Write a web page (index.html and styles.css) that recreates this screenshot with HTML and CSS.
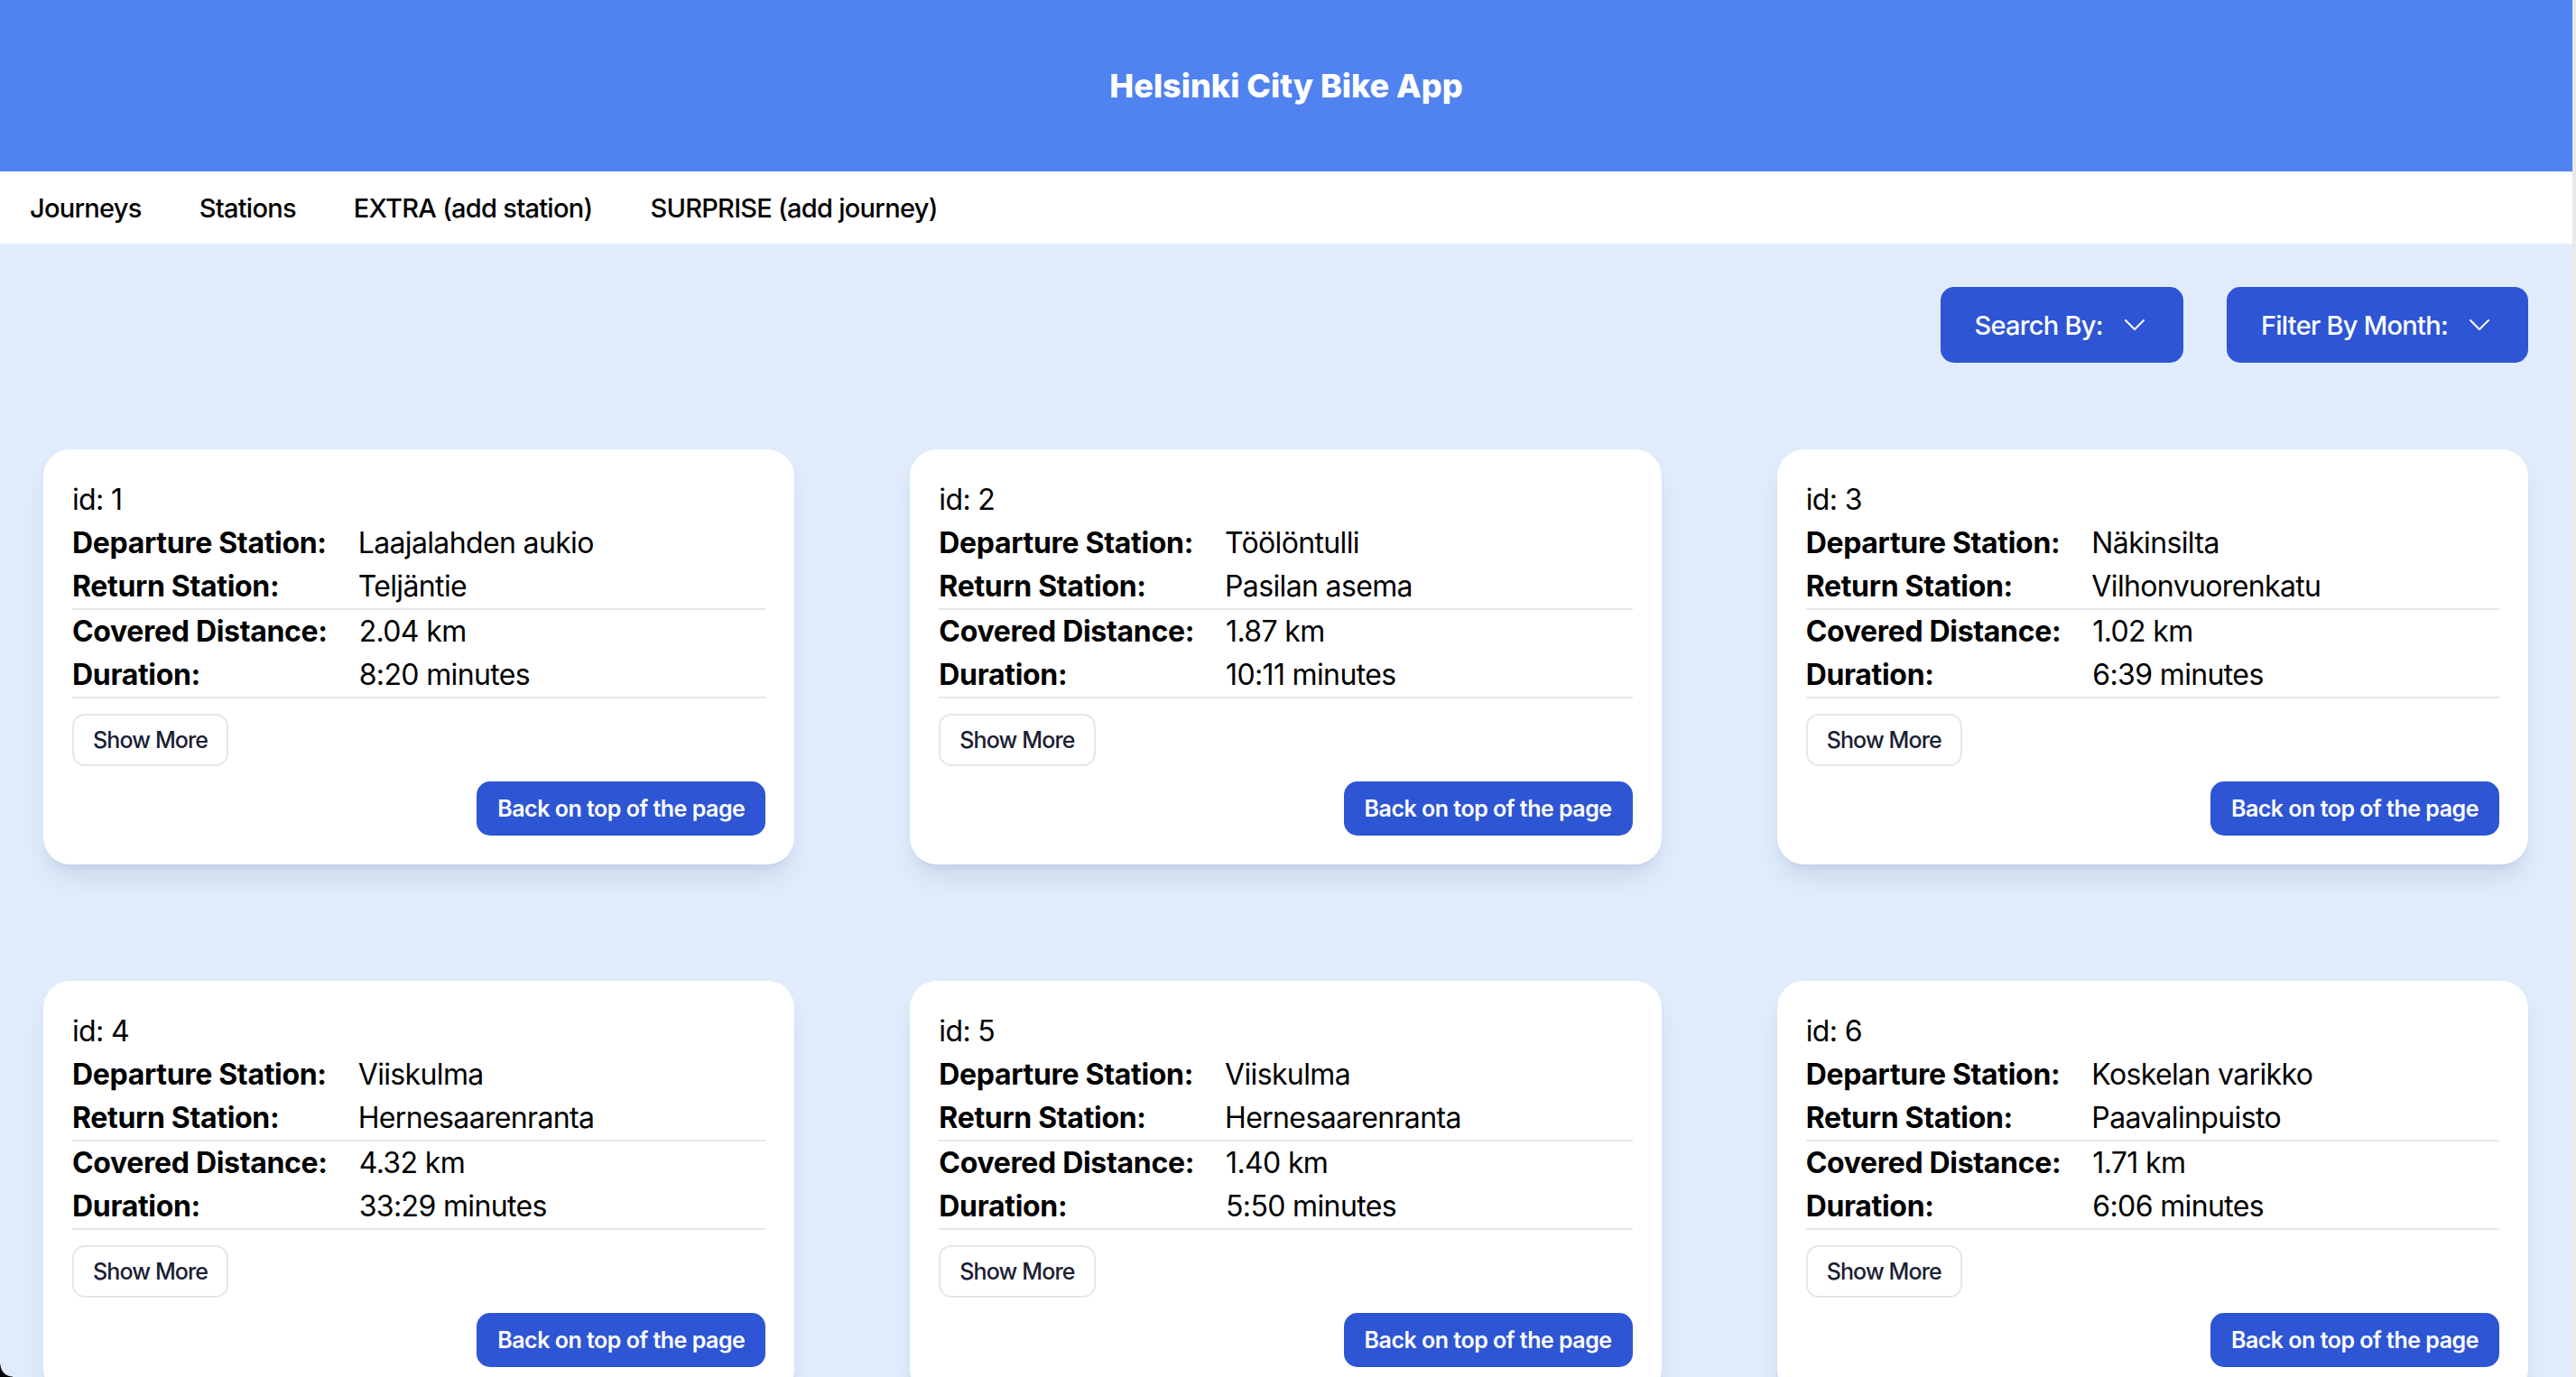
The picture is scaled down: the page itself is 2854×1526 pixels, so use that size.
FILE: index.html
```html
<!DOCTYPE html>
<html lang="en">
<head>
<meta charset="utf-8">
<title>Helsinki City Bike App</title>
<link rel="stylesheet" href="styles.css">
</head>
<body>
<div class="page">
  <header class="app-header">
    <h1 class="app-title">Helsinki City Bike App</h1>
  </header>
  <nav class="main-nav">
    <a class="nav-link" href="#">Journeys</a>
    <a class="nav-link" href="#">Stations</a>
    <a class="nav-link" href="#">EXTRA (add station)</a>
    <a class="nav-link" href="#">SURPRISE (add journey)</a>
  </nav>
  <main class="content">
    <div class="toolbar">
      <button class="dropdown-btn">Search By:
        <svg class="chevron" viewBox="0 0 22 12" width="22" height="12"><polyline points="1,1 11,11 21,1" fill="none" stroke="#fff" stroke-width="2" stroke-linecap="round" stroke-linejoin="round"/></svg>
      </button>
      <button class="dropdown-btn">Filter By Month:
        <svg class="chevron" viewBox="0 0 22 12" width="22" height="12"><polyline points="1,1 11,11 21,1" fill="none" stroke="#fff" stroke-width="2" stroke-linecap="round" stroke-linejoin="round"/></svg>
      </button>
    </div>
    <section class="card-grid">
      <article class="card">
        <p class="card-id">id: 1</p>
        <dl class="info"><dt>Departure Station:</dt><dd>Laajalahden aukio</dd><dt>Return Station:</dt><dd>Teljäntie</dd></dl>
        <dl class="info"><dt>Covered Distance:</dt><dd>2.04 km</dd><dt>Duration:</dt><dd>8:20 minutes</dd></dl>
        <button class="btn-outline">Show More</button>
        <div class="card-footer"><button class="btn-primary">Back on top of the page</button></div>
      </article>
      <article class="card">
        <p class="card-id">id: 2</p>
        <dl class="info"><dt>Departure Station:</dt><dd>Töölöntulli</dd><dt>Return Station:</dt><dd>Pasilan asema</dd></dl>
        <dl class="info"><dt>Covered Distance:</dt><dd>1.87 km</dd><dt>Duration:</dt><dd>10:11 minutes</dd></dl>
        <button class="btn-outline">Show More</button>
        <div class="card-footer"><button class="btn-primary">Back on top of the page</button></div>
      </article>
      <article class="card">
        <p class="card-id">id: 3</p>
        <dl class="info"><dt>Departure Station:</dt><dd>Näkinsilta</dd><dt>Return Station:</dt><dd>Vilhonvuorenkatu</dd></dl>
        <dl class="info"><dt>Covered Distance:</dt><dd>1.02 km</dd><dt>Duration:</dt><dd>6:39 minutes</dd></dl>
        <button class="btn-outline">Show More</button>
        <div class="card-footer"><button class="btn-primary">Back on top of the page</button></div>
      </article>
      <article class="card">
        <p class="card-id">id: 4</p>
        <dl class="info"><dt>Departure Station:</dt><dd>Viiskulma</dd><dt>Return Station:</dt><dd>Hernesaarenranta</dd></dl>
        <dl class="info"><dt>Covered Distance:</dt><dd>4.32 km</dd><dt>Duration:</dt><dd>33:29 minutes</dd></dl>
        <button class="btn-outline">Show More</button>
        <div class="card-footer"><button class="btn-primary">Back on top of the page</button></div>
      </article>
      <article class="card">
        <p class="card-id">id: 5</p>
        <dl class="info"><dt>Departure Station:</dt><dd>Viiskulma</dd><dt>Return Station:</dt><dd>Hernesaarenranta</dd></dl>
        <dl class="info"><dt>Covered Distance:</dt><dd>1.40 km</dd><dt>Duration:</dt><dd>5:50 minutes</dd></dl>
        <button class="btn-outline">Show More</button>
        <div class="card-footer"><button class="btn-primary">Back on top of the page</button></div>
      </article>
      <article class="card">
        <p class="card-id">id: 6</p>
        <dl class="info"><dt>Departure Station:</dt><dd>Koskelan varikko</dd><dt>Return Station:</dt><dd>Paavalinpuisto</dd></dl>
        <dl class="info"><dt>Covered Distance:</dt><dd>1.71 km</dd><dt>Duration:</dt><dd>6:06 minutes</dd></dl>
        <button class="btn-outline">Show More</button>
        <div class="card-footer"><button class="btn-primary">Back on top of the page</button></div>
      </article>
    </section>
  </main>
</div>
</body>
</html>
```
FILE: styles.css
```css
html {
  scrollbar-width: none;
}
::-webkit-scrollbar {
  display: none;
  width: 0;
  height: 0;
}
body {
  margin: 0;
  background: #e9e9ea;
  font-family: Inter, "Noto Sans", "Liberation Sans", sans-serif;
  color: #000;
}
body::after {
  content: "";
  position: fixed;
  left: 0;
  bottom: 0;
  width: 14px;
  height: 14px;
  background: radial-gradient(circle at 100% 0, transparent 13px, #000 14px);
}
.page {
  margin-right: 4px;
  background: #e0ecfb;
  min-height: 1526px;
}
.app-header {
  height: 190px;
  background: #5083f0;
  display: flex;
  align-items: center;
  justify-content: center;
}
.app-title {
  margin: 0;
  color: #fff;
  font-size: 36px;
  font-weight: 800;
  letter-spacing: 0;
}
.main-nav {
  height: 80px;
  background: #fff;
  display: flex;
  align-items: center;
  gap: 64px;
  padding-left: 33px;
}
.nav-link {
  color: #000;
  text-decoration: none;
  font-size: 29px;
  font-weight: 500;
  letter-spacing: -0.025em;
}
.content {
  padding: 48px 49px 0 48px;
}
.toolbar {
  display: flex;
  justify-content: flex-end;
  gap: 48px;
}
.dropdown-btn {
  height: 84px;
  border: none;
  border-radius: 15px;
  background: #2d55d4;
  color: #fff;
  font-family: inherit;
  font-size: 29px;
  font-weight: 500;
  letter-spacing: -0.025em;
  padding: 0 43px 0 38px;
  display: flex;
  align-items: center;
  gap: 24px;
}
.chevron {
  display: block;
  width: 22px;
  height: 12px;
}
.card-grid {
  margin-top: 96px;
  display: grid;
  grid-template-columns: repeat(3, 1fr);
  column-gap: 128px;
  row-gap: 129px;
}
.card {
  background: #fff;
  border-radius: 30px;
  padding: 32px;
  box-shadow: 0 18px 27px -6px rgba(30, 60, 120, 0.12), 0 6px 10px -6px rgba(30, 60, 120, 0.12);
  font-size: 32px;
  line-height: 48px;
  letter-spacing: -0.02em;
}
.card-id {
  margin: 0;
}
.info {
  margin: 0;
  display: grid;
  grid-template-columns: auto 1fr;
  column-gap: 35px;
  border-bottom: 2px solid #e5e7eb;
}
.info dt {
  font-weight: 700;
  letter-spacing: -0.01em;
}
.info dd {
  margin: 0;
}
.btn-outline {
  margin-top: 17px;
  height: 58px;
  padding: 0 21px;
  border: 2px solid #e5e7eb;
  border-radius: 14px;
  background: #fff;
  color: #1a2033;
  font-family: inherit;
  font-size: 25px;
  font-weight: 500;
  letter-spacing: -0.035em;
  display: block;
}
.card-footer {
  display: flex;
  justify-content: flex-end;
  margin-top: 17px;
}
.btn-primary {
  height: 60px;
  padding: 0 23px;
  border: none;
  border-radius: 15px;
  background: #2d55d4;
  color: #fff;
  font-family: inherit;
  font-size: 25px;
  font-weight: 600;
  letter-spacing: -0.02em;
}
```
